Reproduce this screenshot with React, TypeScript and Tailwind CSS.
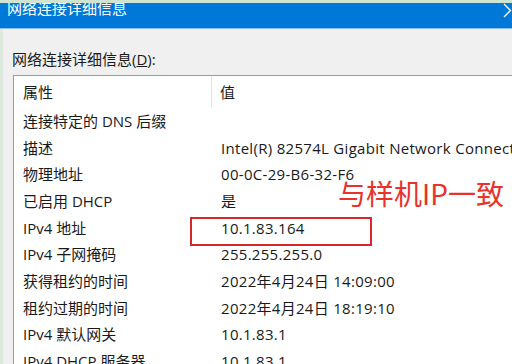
import React from "react";

const rows: [string, string][] = [
  ["连接特定的 DNS 后缀", ""],
  ["描述", "Intel(R) 82574L Gigabit Network Connection"],
  ["物理地址", "00-0C-29-B6-32-F6"],
  ["已启用 DHCP", "是"],
  ["IPv4 地址", "10.1.83.164"],
  ["IPv4 子网掩码", "255.255.255.0"],
  ["获得租约的时间", "2022年4月24日 14:09:00"],
  ["租约过期的时间", "2022年4月24日 18:19:10"],
  ["IPv4 默认网关", "10.1.83.1"],
  ["IPv4 DHCP 服务器", "10.1.83.1"],
];

const font = { fontFamily: '"Open Sans", "Noto Sans CJK SC", sans-serif' };
const cjk = { fontFamily: '"Noto Sans CJK SC", sans-serif' };

export default function App() {
  return (
    <div
      className="relative w-[512px] h-[364px] overflow-hidden bg-[#f0f0f0] flex flex-col"
      style={font}
    >
      <div className="h-[3px] bg-[#cfe5d2] shrink-0" />
      <div className="h-[25px] shrink-0 bg-[#0078d7] overflow-hidden flex items-start pl-[7px]">
        <span className="text-white text-[15px] leading-[15px] -mt-[3px] whitespace-nowrap" style={cjk}>
          网络连接详细信息
        </span>
      </div>
      <div className="h-px shrink-0 bg-[#8fc0ec]" />
      <div className="flex flex-1 min-h-0">
        <div className="w-[3px] shrink-0 bg-[#dde8de]" />
        <div className="flex-1 flex flex-col pl-[9px] min-w-0">
          <div className="h-[46px] shrink-0 flex items-end pb-[5px] text-[15px] text-[#1a1a1a] whitespace-nowrap">
            <span>
              网络连接详细信息(<span className="underline">D</span>):
            </span>
          </div>
          <div className="flex-1 bg-white border-t border-l border-[#9a9a9a] ml-px min-w-0 overflow-hidden">
            <div className="flex h-[32px] items-center text-[15px] text-[#1a1a1a] whitespace-nowrap">
              <div className="w-[198px] pl-[9px] h-full flex items-center border-r border-[#e5e5e5]">属性</div>
              <div className="pl-[8px]">值</div>
            </div>
            {rows.map(([k, v], i) => (
              <div
                key={i}
                className="flex h-[26.67px] items-center text-[15px] text-[#1a1a1a] whitespace-nowrap"
              >
                <div className="w-[198px] pl-[9px] shrink-0">{k}</div>
                <div className="pl-[9px] tracking-[0.3px]">{v}</div>
              </div>
            ))}
          </div>
        </div>
      </div>

      <svg
        className="absolute left-[500px] top-[2px]"
        width="12"
        height="16"
        viewBox="0 0 12 16"
      >
        <path d="M4 2 L11 9 M4 15 L11 8" stroke="white" strokeWidth="1.3" fill="none" />
      </svg>

      <div className="absolute left-[190px] top-[217px] w-[182px] h-[29px] border-2 border-[#d5262b]" />
      <div
        className="absolute left-[338px] top-[175px] text-[28px] leading-[36px] text-[#e8322b] whitespace-nowrap"
        style={cjk}
      >
        与样机IP一致
      </div>
    </div>
  );
}
